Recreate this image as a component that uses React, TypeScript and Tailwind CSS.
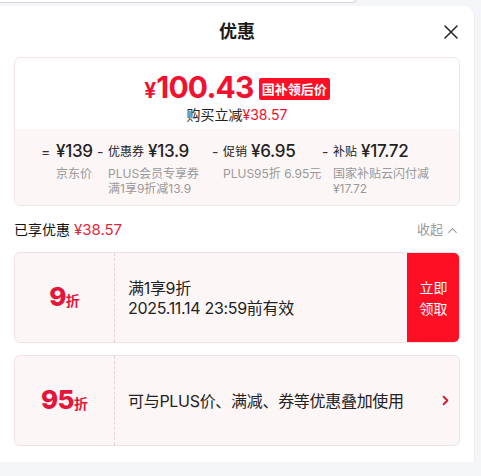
import { ChevronRight, ChevronUp } from 'lucide-react';

const font = { fontFamily: 'Inter, "Noto Sans CJK SC", sans-serif' };

const Breakdown = () => {
  const cols = [
    { sign: '=', label: '', amount: '¥139', desc: ['京东价'], w: 'w-[56px]', sw: 'w-[15px]' },
    { sign: '-', label: '优惠券', amount: '¥13.9', desc: ['PLUS会员专享券', '满1享9折减13.9'], w: 'w-[115px]', sw: 'w-[11px]' },
    { sign: '-', label: '促销', amount: '¥6.95', desc: ['PLUS95折 6.95元'], w: 'w-[110px]', sw: 'w-[11px]' },
    { sign: '-', label: '补贴', amount: '¥17.72', desc: ['国家补贴云闪付减', '¥17.72'], w: 'w-[111px]', sw: 'w-[11px]' },
  ];
  return (
    <div className="flex justify-center bg-[#fdf6f6] pt-[10px] pb-[9px]">
      {cols.map((c) => (
        <div key={c.amount} className={`${c.w} flex shrink-0`}>
          <span className={`${c.sw} shrink-0 pt-[1px] text-[14px] leading-[24px] text-[#333]`}>{c.sign}</span>
          <div className="flex flex-col">
            <div className="flex h-[26px] items-center gap-[4px] whitespace-nowrap text-[#222]">
              {c.label && <span className="text-[12px]">{c.label}</span>}
              <span className="text-[17px] font-medium tracking-[-0.3px]">{c.amount}</span>
            </div>
            <div className="mt-[1px] whitespace-nowrap text-[12px] leading-[15px] text-[#999]">
              {c.desc.map((d) => (
                <div key={d}>{d}</div>
              ))}
            </div>
          </div>
        </div>
      ))}
    </div>
  );
};

const Coupon = ({ big, text, lines, action }: { big: string; text?: string; lines?: string[]; action: 'button' | 'arrow' }) => (
  <div className="mx-[14px] flex h-[91px] overflow-hidden rounded-[6px] border border-[#f2e1e4] bg-[#fdf6f7]">
    <div className="flex w-[100px] shrink-0 items-baseline justify-center border-r border-dashed border-[#e9cfd5] pt-[31px]">
      <span className="text-[26px] font-extrabold leading-none tracking-[-0.5px] text-[#e4153a]">{big}</span>
      <span className="text-[14px] font-bold text-[#e4153a]">折</span>
    </div>
    <div className="flex flex-1 flex-col justify-center pl-[13px] text-[16px] leading-[20px] tracking-[-0.3px] text-[#222]">
      {lines ? lines.map((l) => <div key={l}>{l}</div>) : <div>{text}</div>}
    </div>
    {action === 'button' ? (
      <div className="-my-px -mr-px flex w-[53px] flex-col items-center justify-center rounded-r-[6px] bg-[#ff0f23] text-[14px] leading-[21px] text-white">
        <span>立即</span>
        <span>领取</span>
      </div>
    ) : (
      <div className="flex w-[32px] items-center justify-center pl-[4px]">
        <ChevronRight size={15} strokeWidth={3} className="text-[#d9163a]" />
      </div>
    )}
  </div>
);

export default function App() {
  return (
    <div className="flex h-[476px] w-[481px] flex-col overflow-hidden bg-[#f4f5f8]" style={font}>
      <div className="h-[3px] w-[356px] rounded-br-[4px] border-r border-b border-[#d6d6d6] bg-white" />
      <div className="mt-[3px] h-[456px] w-[475px] rounded-tr-[10px] border-r border-[#ececec] bg-white">
        {/* header */}
        <div className="relative flex h-[51px] items-center justify-center">
          <span className="text-[18px] font-bold text-[#1a1a1a]">优惠</span>
          <svg className="absolute right-[16px] top-[19px]" width="14" height="14" viewBox="0 0 14 14">
            <path d="M1 1 L13 13 M13 1 L1 13" stroke="#222" strokeWidth="1.5" strokeLinecap="round" />
          </svg>
        </div>

        {/* price card */}
        <div className="mx-[14px] overflow-hidden rounded-[6px] border border-[#f0e4e6]">
          <div className="flex h-[71px] flex-col items-center pt-[12px]">
            <div className="flex items-center">
              <span className="mt-[6px] text-[21px] font-bold leading-none text-[#f0122e]">¥</span>
              <span className="text-[30px] font-bold leading-[34px] tracking-[-0.8px] text-[#f0122e]">100.43</span>
              <span className="ml-[5px] mt-[3px] rounded-[2px] bg-[#ff0f23] px-[3px] text-[13px] font-bold leading-[22px] text-white">国补领后价</span>
            </div>
            <div className="mt-[2px] text-[14px] leading-[18px] text-[#222]">
              购买立减<span className="text-[#f0122e]">¥38.57</span>
            </div>
          </div>
          <Breakdown />
        </div>

        {/* saved row */}
        <div className="mx-[14px] mt-[12px] flex h-[24px] items-center justify-between">
          <div className="text-[14px] text-[#111]">
            已享优惠 <span className="text-[15px] text-[#e0263c]">¥38.57</span>
          </div>
          <div className="flex items-center gap-[2px] text-[13px] text-[#999]">
            收起
            <ChevronUp size={15} strokeWidth={1.8} />
          </div>
        </div>

        <div className="mt-[10px] flex flex-col gap-[12px]">
          <Coupon big="9" lines={['满1享9折', '2025.11.14 23:59前有效']} action="button" />
          <Coupon big="95" text="可与PLUS价、满减、券等优惠叠加使用" action="arrow" />
        </div>
      </div>
    </div>
  );
}
